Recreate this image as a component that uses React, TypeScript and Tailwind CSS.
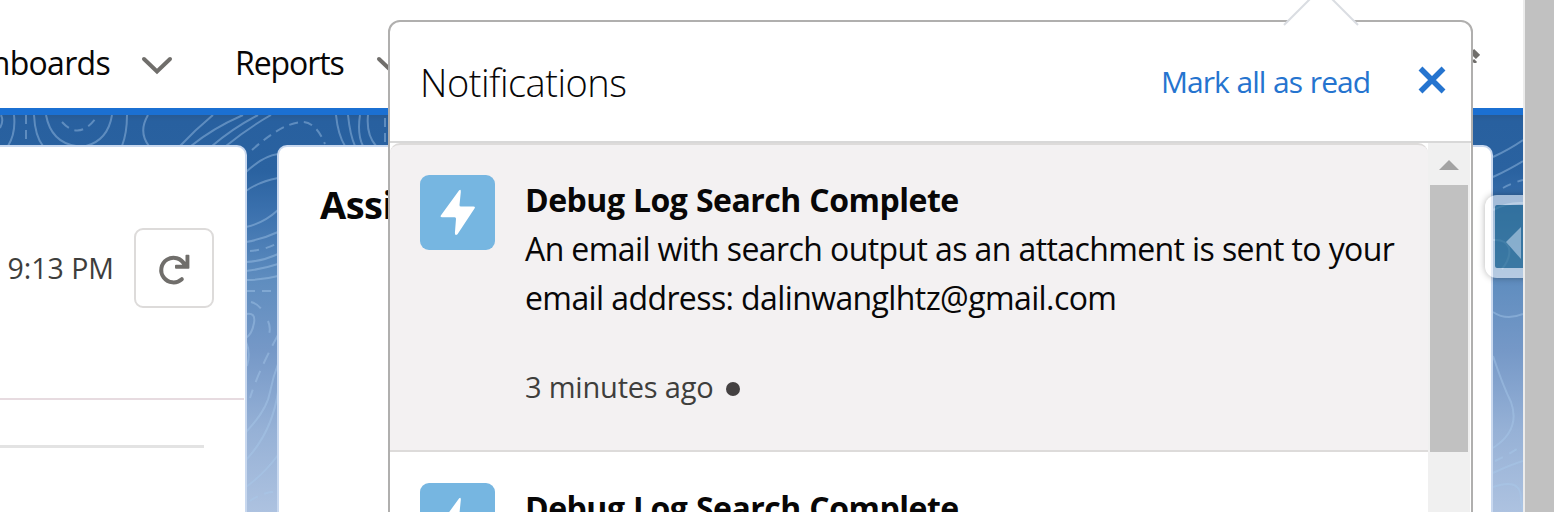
import React from "react";

function ChevronDown() {
  return (
    <svg width="32" height="20" viewBox="0 0 32 20" className="shrink-0">
      <path d="M3 4 L16 16.500 L29 4" fill="none" stroke="#706e6b" strokeWidth="4" strokeLinecap="round" />
    </svg>
  );
}

function Contours() {
  return (
    <svg
      className="absolute inset-0"
      width="1523"
      height="397"
      viewBox="0 115 1523 397"
      fill="none"
      stroke="#a9cbed"
      strokeOpacity="0.42"
      strokeWidth="2"
    >
      <path d="M14 115 Q16 133 8 146 M0 128 Q4 121 1 115" />
      <path d="M26 115 V146" strokeDasharray="9 6" />
      <path d="M34 115 Q35 136 43 146 M46 115 Q51 142 76 146 M86 146 Q108 140 112 115" />
      <path d="M62 122 Q80 142 98 115" strokeDasharray="9 6" />
      <path d="M127 115 Q127 133 122 146 M148 115 Q138 132 149 146" />
      <path d="M180 146 Q195 130 213 115 M191 146 Q213 128 243 115 M212 146 Q233 128 258 115 M226 146 Q248 128 271 115" />
      <path d="M252 150 Q282 123 302 122 Q316 122 325 144" strokeDasharray="9 6" />
      <path d="M336 115 Q338 135 345 146 M348 115 Q350 135 355 146 M360 115 Q357 134 363 146 M368 115 Q366 134 376 146" />
      <path d="M385 118 V146" strokeDasharray="9 6" />
      <path d="M246 172 Q263 156 278 154 M246 191 Q258 182 278 178 M246 227 Q264 223 278 210 M246 242 Q263 239 278 232" />
      <path d="M250 251 Q265 250 278 243 M246 291 H274" strokeDasharray="9 7" />
      <path d="M246 262 Q263 261 278 254 M246 271 Q263 269 278 264 M246 280 Q263 280 278 276" />
      <path d="M251 302 Q259 304 263 312 M268 321 Q271 328 269 334 M278 335 Q258 372 250 398" strokeDasharray="12 8" />
      <path d="M246 314 Q256 312 254 323 Q252 334 246 338 M246 342 Q251 353 247 366" />
      <path d="M246 432 Q267 410 270 392 Q273 377 278 364 M246 460 Q272 432 278 392 M246 487 Q264 474 278 455" />
      <path d="M250 501 Q264 491 278 492" strokeDasharray="9 7" />
      <path d="M1493 157 Q1510 149 1523 140 M1493 177 Q1510 169 1523 161" />
      <path d="M1503 188 Q1512 183 1523 180 M1495 461 Q1508 455 1523 445" strokeDasharray="9 7" />
      <path d="M1493 210 Q1508 202 1523 203 M1493 240 Q1506 239 1509 248 Q1511 258 1502 269 M1493 312 Q1506 321 1523 314" />
      <path d="M1493 356 Q1503 386 1511 402 Q1521 430 1493 448 M1493 473 Q1510 465 1523 461 M1493 487 Q1522 477 1521 500 L1523 512" />
    </svg>
  );
}

function AppIcon() {
  return (
    <div className="flex h-[75px] w-[75px] shrink-0 items-center justify-center rounded-[9px] bg-[#76b6e1]">
      <svg width="75" height="75" viewBox="0 0 75 75">
        <path
          d="M39 15.500 L21 40.300 Q19.800 42.200 22 42.200 H34.600 Q36.200 42.200 36 43.800 L34.900 58 Q35 61 37.500 59.200 L54.500 33.500 Q55.700 31.500 53.500 31.500 H41 Q39.300 31.500 39.500 30 L40.800 17 Q41 13.500 39 15.500 Z"
          fill="#fff"
        />
      </svg>
    </div>
  );
}

function Notification({ children, className }: { children?: React.ReactNode; className: string }) {
  return (
    <article className={`flex shrink-0 gap-[30px] border-b-2 border-[#dddbda] pl-[30px] ${className}`}>
      <AppIcon />
      <div className="min-w-0">
        <h3 className="whitespace-nowrap text-[32px] font-bold leading-[49px] tracking-[-0.5px] [word-spacing:0.7px]">Debug Log Search Complete</h3>
        {children}
      </div>
    </article>
  );
}

export default function App() {
  return (
    <div className="relative flex h-[512px] w-[1554px] overflow-hidden bg-white font-['Open_Sans','Noto_Sans',sans-serif] text-[#080707]">
      <div className="flex w-[1523px] shrink-0 flex-col">
        <nav className="flex h-[108px] shrink-0 items-center overflow-hidden pt-[18px]">
          <span className="flex w-[110px] shrink-0 justify-end whitespace-nowrap text-[32px] tracking-[-0.7px]">Dashboards</span>
          <span className="ml-[31px] mt-[3px]"><ChevronDown /></span>
          <span className="ml-[62px] w-[109px] whitespace-nowrap text-[32px] tracking-[-1.1px]">Reports</span>
          <span className="ml-8 mt-[3px]"><ChevronDown /></span>
          <svg className="ml-auto mr-[43px] -mt-4" width="16" height="16" viewBox="0 0 16 16">
            <path d="M8 4 L14 10" stroke="#706e6b" strokeWidth="6" />
            <path d="M9 13 L12 16" stroke="#706e6b" strokeWidth="3" />
          </svg>
        </nav>
        <div className="h-[7px] shrink-0 bg-[#1b70d2]" />
        <main className="relative min-h-0 flex-1 overflow-hidden bg-[linear-gradient(180deg,#285a92_0px,#28609f_6px,#2a62a0_55px,#3a70ad_95px,#5f8dbf_165px,#7598c7_235px,#96b1d6_315px,#adc2e0_397px)]">
          <Contours />
          <div className="relative flex h-full items-stretch gap-[30px] pt-[30px]">
            <section className="flex w-[247px] shrink-0 flex-col rounded-tr-[10px] border-r-2 border-t-2 border-[#c8d8ef] bg-white">
              <div className="mt-[81px] flex h-[80px] items-center justify-end gap-5 pr-[31px]">
                <span className="whitespace-nowrap text-[28.5px] tracking-[0px] text-[#3e3e3c]">9:13 PM</span>
                <button className="flex h-[80px] w-[80px] items-center justify-center rounded-[9px] border-2 border-[#dddbda] bg-white">
                  <svg width="32" height="32" viewBox="0 0 32 32" className="mt-[2px]">
                    <path d="M23.800 26.200 A12.300 12.300 0 1 1 26.500 11.500" fill="none" stroke="#706e6b" strokeWidth="4" strokeLinecap="round" />
                    <path d="M27.500 2.500 Q27.500 1.700 28.300 1.700 H30.600 Q31.400 1.700 31.400 2.500 V14.900 Q31.400 15.700 30.600 15.700 H18 Q17 15.700 17 14.700 V12.800 Q17 11.800 18 11.800 H24 L27.500 8.500 Z" fill="#706e6b" />
                  </svg>
                </button>
              </div>
              <div className="mt-[90px] h-[2px] w-[244px] bg-[#e7dbe0]" />
              <div className="mt-[45px] h-[3px] w-[204px] bg-[#e3e3e3]" />
            </section>
            <section className="w-[1216px] shrink-0 rounded-t-[10px] border-x-2 border-t-2 border-[#c8d8ef] bg-white pl-[41px] pt-[33px]">
              <h2 className="text-[38px] font-bold leading-[48px] tracking-[-0.5px]">Assistant</h2>
            </section>
          </div>
          <div className="absolute left-[1485px] top-[80px] flex h-[83px] w-[50px] rounded-l-[12px] border-[10px] border-white/55 bg-[#2f7298]/70 bg-clip-padding shadow-[0_0_7px_rgba(0,0,0,0.3)]">
            <svg width="28" height="63" viewBox="0 0 28 63">
              <path d="M11 37 L26 22 V54 Z" fill="#a3c1dc" fillOpacity="0.75" />
            </svg>
          </div>
        </main>
      </div>
      <div className="w-[31px] shrink-0 border-l-2 border-[#ececec] bg-[#c1c1c1]" />

      <div className="absolute left-[388px] top-[20px] flex h-[520px] w-[1085px] flex-col overflow-hidden rounded-t-[12px] border-2 border-[#b0afae] bg-white">
        <header className="flex h-[119px] shrink-0 items-center pl-[30px] pr-[25px]">
          <h1 className="mt-[2px] whitespace-nowrap text-[38px] font-light tracking-[-0.5px]">Notifications</h1>
          <a className="ml-auto whitespace-nowrap text-[30px] tracking-[-1px] text-[#2574cf] [word-spacing:1px]">Mark all as read</a>
          <svg className="-mt-[4px] ml-12" width="28" height="28" viewBox="0 0 28 28">
            <path d="M2.500 2.500 L25.500 25.500 M25.500 2.500 L2.500 25.500" stroke="#2574cf" strokeWidth="5.500" />
          </svg>
        </header>
        <div className="flex min-h-0 flex-1 border-t-2 border-[#d8d8d8]">
          <div className="flex w-[1038px] shrink-0 flex-col">
            <Notification className="h-[309px] rounded-t-[10px] border-t-2 bg-[#f3f1f2] pt-[30px]">
              <p className="whitespace-nowrap text-[32px] leading-[49px] tracking-[-0.6px]">
                An email with search output as an attachment is sent to your
                <br />
                email address: dalinwanglhtz@gmail.com
              </p>
              <p className="mt-[40px] flex items-center text-[29px] leading-[49px] tracking-[-0.2px] text-[#3e3e3c]">
                3 minutes ago
                <span className="ml-3 mt-[4px] h-[14px] w-[14px] rounded-full bg-[#444142]" />
              </p>
            </Notification>
            <Notification className="h-[309px] bg-white pt-[31px]" />
          </div>
          <div className="flex w-[42px] flex-col items-center bg-[#f0f0f0]">
            <div className="flex h-[42px] shrink-0 items-center pt-[1px]">
              <svg width="20" height="10" viewBox="0 0 20 10"><path d="M0 10 L10 0 L20 10 Z" fill="#a3a3a3" /></svg>
            </div>
            <div className="h-[267px] w-[38px] shrink-0 bg-[#c1c1c1]" />
          </div>
        </div>
      </div>
      <svg className="absolute left-[1282px] top-0" width="78" height="26" viewBox="0 0 78 26">
        <path d="M2 25 L28 0 H50 L76 25 Z" fill="#fff" />
        <path d="M2 25 L28 -1 M50 -1 L76 25" stroke="#dadde2" strokeWidth="2" fill="none" />
      </svg>
    </div>
  );
}
